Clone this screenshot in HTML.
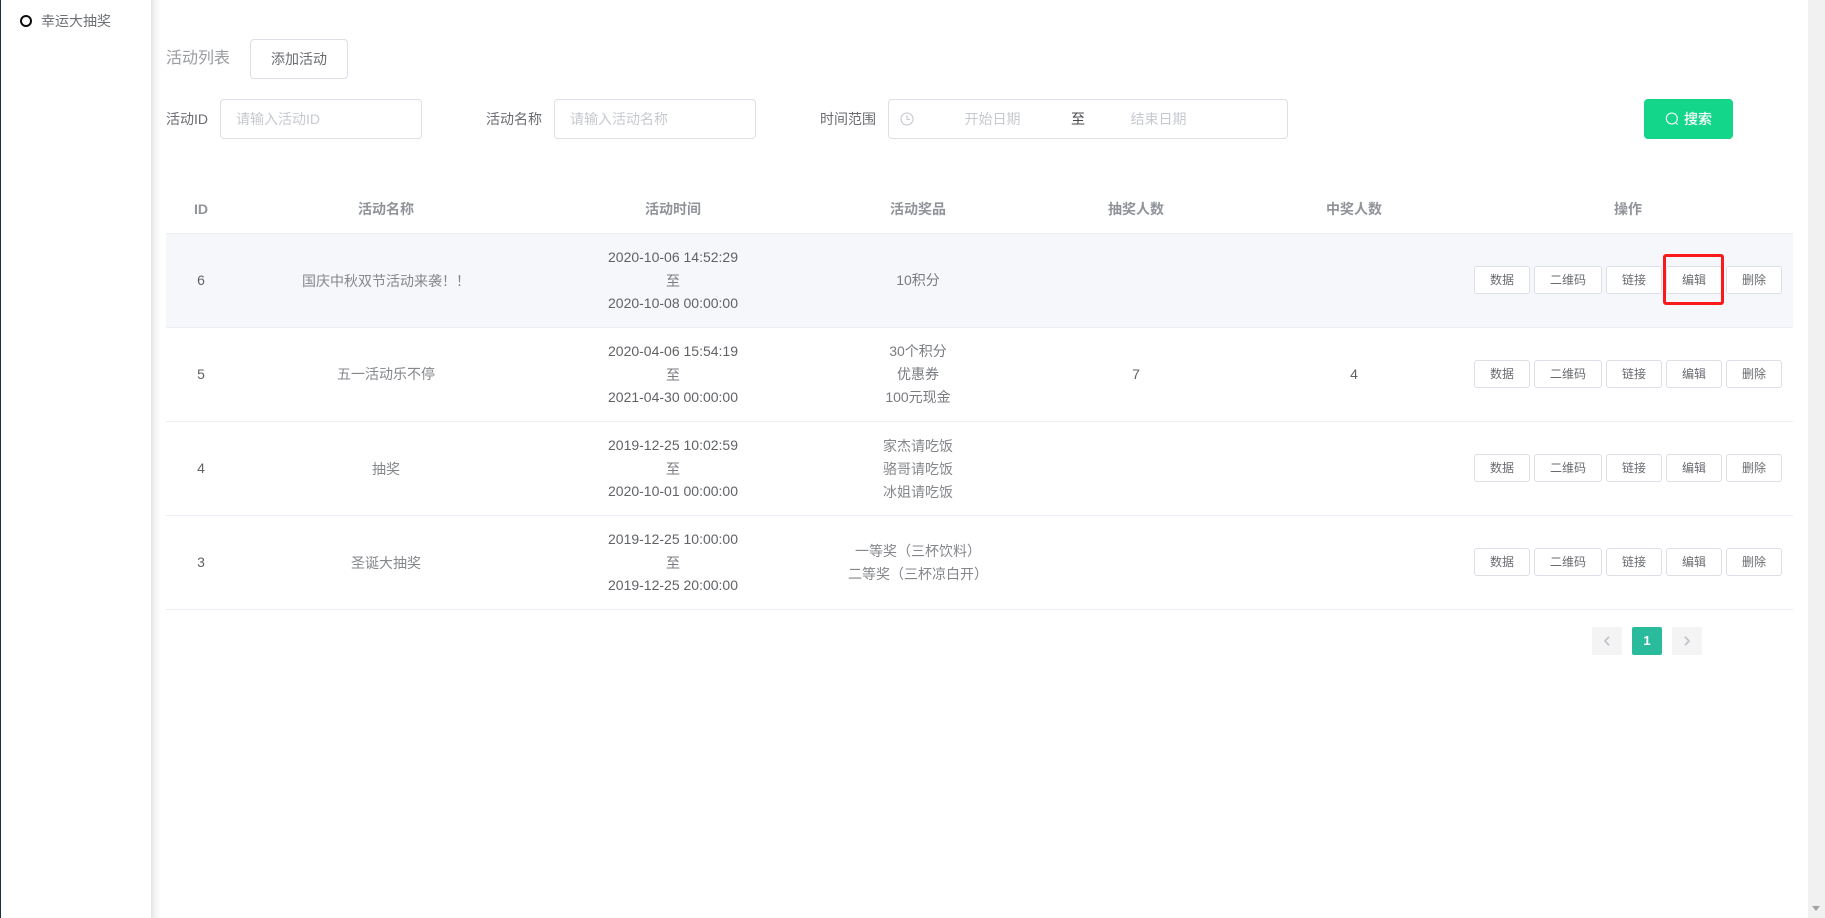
<!DOCTYPE html>
<html lang="zh">
<head>
<meta charset="utf-8">
<title>活动列表</title>
<style>
*{box-sizing:border-box;margin:0;padding:0}
html,body{width:1825px;height:918px;overflow:hidden;background:#fff;font-family:"Liberation Sans","Noto Sans CJK SC",sans-serif;font-size:14px;color:#606266}
.a{position:absolute}
#side{left:0;top:0;width:151px;height:918px;background:#fff;border-left:1px solid #1f2d3d}
#shade{left:151px;top:0;width:10px;height:918px;background:linear-gradient(90deg,#e4e4e4 0,#f3f3f3 40%,#fff 100%)}
#dot{left:20.3px;top:15px;width:12px;height:12px;border:2px solid #0c0c0c;border-radius:50%}
.box{border:1px solid #dcdfe6;border-radius:4px;background:#fff}
.ph{color:#c6c9cf;line-height:38px;white-space:nowrap}
.lab{line-height:40px;height:40px;white-space:nowrap;color:#696b70}
.c{text-align:center;transform:translateX(-50%);white-space:nowrap}
.th{top:199px;line-height:20px;font-weight:bold;color:#909399;font-size:14px}
.row{left:166px;width:1627px;height:94px;border-bottom:1px solid #ebeef5}
.cell{line-height:23px;color:#606266}
.mid{line-height:20px}
.g{color:#85878c}
.z{position:relative;top:1px;color:#797b80}
.b{height:28px;line-height:26px;font-size:12px;text-align:center;border:1px solid #dcdfe6;border-radius:3px;background:#fff;color:#696b70}
.pg{top:627px;width:30px;height:28px;border-radius:2px;background:#f4f4f5}
</style>
</head>
<body>
<div id="side" class="a"></div>
<div id="shade" class="a"></div>
<div id="dot" class="a"></div>
<div class="a" style="left:41px;top:11px;line-height:20px;color:#6e7075">幸运大抽奖</div>

<div class="a" style="left:166px;top:48px;font-size:16px;line-height:22px;color:#9a9ca1">活动列表</div>
<div class="a box" style="left:250px;top:39px;width:98px;height:40px;line-height:38px;text-align:center;color:#696b70">添加活动</div>

<div class="a lab" style="left:166px;top:99px">活动ID</div>
<div class="a box ph" style="left:220px;top:99px;width:202px;height:40px;padding-left:15px">请输入活动ID</div>
<div class="a lab" style="left:486px;top:99px">活动名称</div>
<div class="a box ph" style="left:554px;top:99px;width:202px;height:40px;padding-left:15px">请输入活动名称</div>
<div class="a lab" style="left:820px;top:99px">时间范围</div>
<div class="a box" style="left:888px;top:99px;width:400px;height:40px"></div>
<svg class="a" style="left:900px;top:112px" width="14" height="14" viewBox="0 0 14 14" fill="none" stroke="#c0c4cc" stroke-width="1"><circle cx="7" cy="7" r="6"/><path d="M7 3.2V7.4H10"/></svg>
<div class="a c ph" style="left:992.5px;top:100px">开始日期</div>
<div class="a c" style="left:1078px;top:109px;line-height:20px;color:#45474b">至</div>
<div class="a c ph" style="left:1158.5px;top:100px">结束日期</div>
<div class="a" style="left:1644px;top:99px;width:89px;height:40px;border-radius:4px;background:#13d68a"></div>
<svg class="a" style="left:1665px;top:112px" width="14" height="14" viewBox="0 0 14 14" fill="none" stroke="#fff" stroke-width="1.1"><circle cx="6.8" cy="6.5" r="5.5"/><path d="M10.6 10.4L12.6 12.6"/></svg>
<div class="a" style="left:1684px;top:109px;line-height:20px;color:#fff;text-shadow:0 0 .6px #fff">搜索</div>

<div class="a c th" style="left:201px">ID</div>
<div class="a c th" style="left:386px">活动名称</div>
<div class="a c th" style="left:673px">活动时间</div>
<div class="a c th" style="left:918px">活动奖品</div>
<div class="a c th" style="left:1136px">抽奖人数</div>
<div class="a c th" style="left:1354px">中奖人数</div>
<div class="a c th" style="left:1628px">操作</div>
<div class="a" style="left:166px;top:233px;width:1627px;height:1px;background:#ebeef5"></div>

<div class="a row" style="top:234px;background:#f5f7fa"></div>
<div class="a row" style="top:328px"></div>
<div class="a row" style="top:422px"></div>
<div class="a row" style="top:516px"></div>

<!-- row 6 -->
<div class="a c mid" style="left:201px;top:270px">6</div>
<div class="a c mid g" style="left:386px;top:271px">国庆中秋双节活动来袭！！</div>
<div class="a c cell" style="left:673px;top:246px">2020-10-06 14:52:29<br><span class="z">至</span><br>2020-10-08 00:00:00</div>
<div class="a c mid" style="left:918px;top:270px;color:#797b80">10积分</div>

<!-- row 5 -->
<div class="a c mid" style="left:201px;top:364px">5</div>
<div class="a c mid g" style="left:386px;top:364px">五一活动乐不停</div>
<div class="a c cell" style="left:673px;top:340px">2020-04-06 15:54:19<br><span class="z">至</span><br>2021-04-30 00:00:00</div>
<div class="a c cell" style="left:918px;top:340px;color:#797b80">30个积分<br>优惠券<br>100元现金</div>
<div class="a c mid" style="left:1136px;top:364px">7</div>
<div class="a c mid" style="left:1354px;top:364px">4</div>

<!-- row 4 -->
<div class="a c mid" style="left:201px;top:458px">4</div>
<div class="a c mid g" style="left:386px;top:459px">抽奖</div>
<div class="a c cell" style="left:673px;top:434px">2019-12-25 10:02:59<br><span class="z">至</span><br>2020-10-01 00:00:00</div>
<div class="a c cell g" style="left:918px;top:435px">家杰请吃饭<br>骆哥请吃饭<br>冰姐请吃饭</div>

<!-- row 3 -->
<div class="a c mid" style="left:201px;top:552px">3</div>
<div class="a c mid g" style="left:386px;top:553px">圣诞大抽奖</div>
<div class="a c cell" style="left:673px;top:528px">2019-12-25 10:00:00<br><span class="z">至</span><br>2019-12-25 20:00:00</div>
<div class="a c cell g" style="left:918px;top:540px">一等奖（三杯饮料）<br>二等奖（三杯凉白开）</div>

<!-- buttons -->
<div class="a b" style="left:1474px;top:266px;width:56px">数据</div>
<div class="a b" style="left:1534px;top:266px;width:68px">二维码</div>
<div class="a b" style="left:1606px;top:266px;width:56px">链接</div>
<div class="a b" style="left:1666px;top:266px;width:56px">编辑</div>
<div class="a b" style="left:1726px;top:266px;width:56px">删除</div>

<div class="a b" style="left:1474px;top:360px;width:56px">数据</div>
<div class="a b" style="left:1534px;top:360px;width:68px">二维码</div>
<div class="a b" style="left:1606px;top:360px;width:56px">链接</div>
<div class="a b" style="left:1666px;top:360px;width:56px">编辑</div>
<div class="a b" style="left:1726px;top:360px;width:56px">删除</div>

<div class="a b" style="left:1474px;top:454px;width:56px">数据</div>
<div class="a b" style="left:1534px;top:454px;width:68px">二维码</div>
<div class="a b" style="left:1606px;top:454px;width:56px">链接</div>
<div class="a b" style="left:1666px;top:454px;width:56px">编辑</div>
<div class="a b" style="left:1726px;top:454px;width:56px">删除</div>

<div class="a b" style="left:1474px;top:548px;width:56px">数据</div>
<div class="a b" style="left:1534px;top:548px;width:68px">二维码</div>
<div class="a b" style="left:1606px;top:548px;width:56px">链接</div>
<div class="a b" style="left:1666px;top:548px;width:56px">编辑</div>
<div class="a b" style="left:1726px;top:548px;width:56px">删除</div>

<!-- annotation -->
<div class="a" style="left:1663px;top:254px;width:61px;height:51px;border:3px solid #fb1a1a;border-radius:3px"></div>

<!-- pagination -->
<div class="a pg" style="left:1592px"></div>
<svg class="a" style="left:1600px;top:634px" width="14" height="14" viewBox="0 0 14 14" fill="none" stroke="#c0c4cc" stroke-width="1.8"><path d="M9 2.7L5 7l4 4.3"/></svg>
<div class="a pg" style="left:1632px;background:#29bb9c;color:#fff;font-weight:bold;font-size:13px;line-height:28px;text-align:center">1</div>
<div class="a pg" style="left:1672px"></div>
<svg class="a" style="left:1680px;top:634px" width="14" height="14" viewBox="0 0 14 14" fill="none" stroke="#c0c4cc" stroke-width="1.8"><path d="M5 2.7L9 7l-4 4.3"/></svg>

<!-- scrollbar -->
<div class="a" style="left:1808px;top:0;width:17px;height:918px;background:#f1f1f1"></div>
<svg class="a" style="left:1812px;top:905px" width="9" height="7" viewBox="0 0 9 7"><path d="M0 1H8L4 6z" fill="#a3a3a3"/></svg>
</body>
</html>
